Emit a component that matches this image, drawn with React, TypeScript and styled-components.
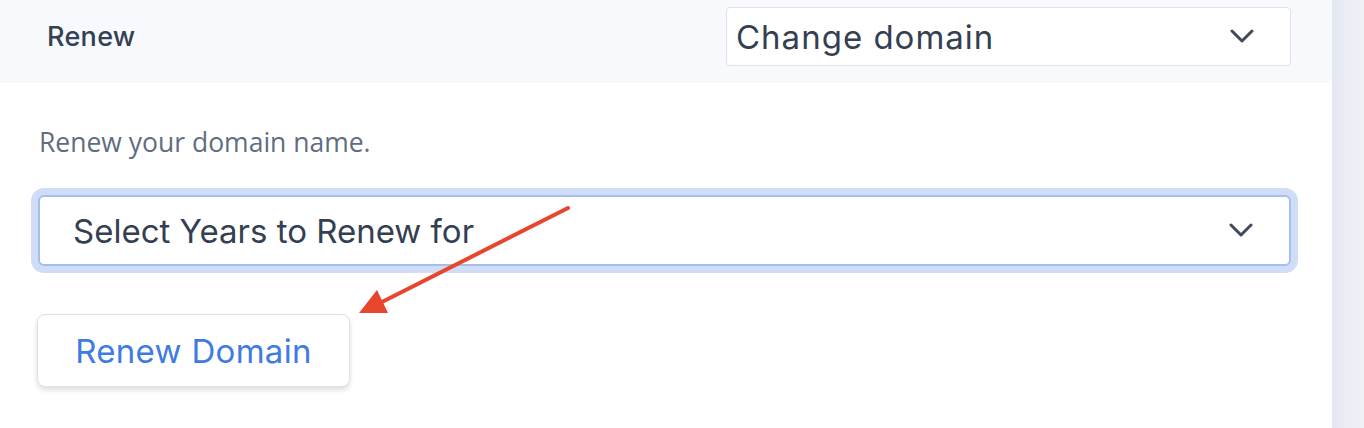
import React from 'react';
import styled, { createGlobalStyle } from 'styled-components';

const GlobalStyle = createGlobalStyle`
  html, body {
    margin: 0;
    padding: 0;
    background: #ffffff;
  }
  body {
    font-family: 'Inter', 'Liberation Sans', sans-serif;
    -webkit-font-smoothing: antialiased;
  }
`;

const Page = styled.div`
  display: flex;
  width: 1364px;
  height: 428px;
  overflow: hidden;
`;

const Main = styled.div`
  position: relative;
  width: 1332px;
  flex-shrink: 0;
  background: #ffffff;
`;

const SideStrip = styled.div`
  flex: 1;
  background: linear-gradient(90deg, #e3e7f1 0%, #eaedf5 40%, #eef0f6 100%);
`;

const HeaderBar = styled.div`
  background: #f8f9fc;
  display: flex;
  align-items: center;
  justify-content: space-between;
  padding: 7px 41px 17px 47px;
`;

const HeaderTitle = styled.span`
  font-size: 27px;
  font-weight: 500;
  letter-spacing: 0.3px;
  color: #344054;
`;

const SelectBox = styled.div<{ $focused?: boolean; $width: number; $height: number; $padLeft: number; $tracking: number }>`
  display: flex;
  align-items: center;
  justify-content: space-between;
  box-sizing: border-box;
  width: ${(p) => p.$width}px;
  height: ${(p) => p.$height}px;
  padding: 0 36px 0 ${(p) => p.$padLeft}px;
  background: #ffffff;
  border-radius: ${(p) => (p.$focused ? 6 : 4)}px;
  border: ${(p) => (p.$focused ? '2px solid #a3bff0' : '1.5px solid #e0e2e7')};
  box-shadow: ${(p) => (p.$focused ? '0 0 0 7px #d0ddf6' : 'none')};
  font-size: 33px;
  letter-spacing: ${(p) => p.$tracking}px;
  color: #343f52;
`;

const Body = styled.div`
  padding: 43px 41px 0 38px;
`;

const Description = styled.p`
  margin: 0 0 37px 1px;
  font-family: 'Open Sans', 'Liberation Sans', sans-serif;
  font-size: 26.5px;
  line-height: 32px;
  color: #5f6d82;
`;

const RenewButton = styled.button`
  display: block;
  margin: 48px 0 0 -1px;
  width: 313px;
  height: 73px;
  padding: 0;
  background: #ffffff;
  border: 1.5px solid #dfe1e6;
  border-radius: 8px;
  box-shadow: 0 3px 5px rgba(16, 24, 40, 0.14);
  font-family: 'Inter', 'Liberation Sans', sans-serif;
  font-size: 33px;
  font-weight: 400;
  letter-spacing: 0.3px;
  color: #3f7be3;
  cursor: pointer;
`;

const Annotation = styled.svg`
  position: absolute;
  left: 0;
  top: 0;
  pointer-events: none;
`;

const Chevron: React.FC = () => (
  <svg width="24" height="16" viewBox="0 0 24 16">
    <polyline points="2,2 12,12 22,2" fill="none" stroke="#3f4a5a" strokeWidth="3" strokeLinecap="round" strokeLinejoin="round" />
  </svg>
);

const App: React.FC = () => {
  return (
    <Page>
      <GlobalStyle />
      <Main>
        <HeaderBar>
          <HeaderTitle>Renew</HeaderTitle>
          <SelectBox $width={565} $height={59} $padLeft={9} $tracking={1}>
            <span>Change domain</span>
            <Chevron />
          </SelectBox>
        </HeaderBar>
        <Body>
          <Description>Renew your domain name.</Description>
          <SelectBox $focused $width={1253} $height={71} $padLeft={33} $tracking={0}>
            <span>Select Years to Renew for</span>
            <Chevron />
          </SelectBox>
          <RenewButton>Renew Domain</RenewButton>
        </Body>
        <Annotation width="1332" height="428" viewBox="0 0 1332 428">
          <line x1="568" y1="208" x2="382" y2="302" stroke="#e8452c" strokeWidth="4" strokeLinecap="round" />
          <polygon points="359,313 377,290 388,313" fill="#e8452c" />
        </Annotation>
      </Main>
      <SideStrip />
    </Page>
  );
};

export default App;
